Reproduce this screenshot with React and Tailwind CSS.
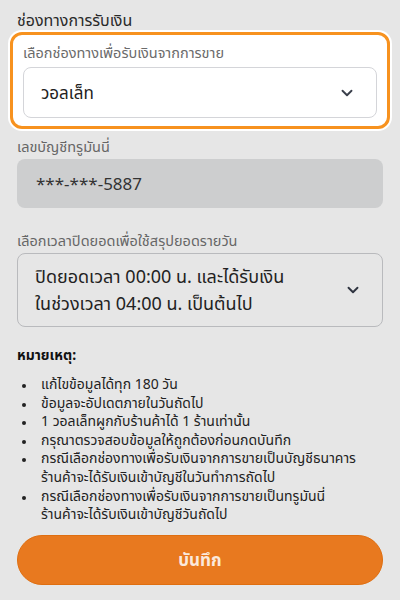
import { ChevronDown } from 'lucide-react';

const notes = [
  ['แก้ไขข้อมูลได้ทุก 180 วัน'],
  ['ข้อมูลจะอัปเดตภายในวันถัดไป'],
  ['1 วอลเล็ทผูกกับร้านค้าได้ 1 ร้านเท่านั้น'],
  ['กรุณาตรวจสอบข้อมูลให้ถูกต้องก่อนกดบันทึก'],
  ['กรณีเลือกช่องทางเพื่อรับเงินจากการขายเป็นบัญชีธนาคาร', 'ร้านค้าจะได้รับเงินเข้าบัญชีในวันทำการถัดไป'],
  ['กรณีเลือกช่องทางเพื่อรับเงินจากการขายเป็นทรูมันนี่', 'ร้านค้าจะได้รับเงินเข้าบัญชีวันถัดไป'],
];

const App = () => {
  return (
    <div
      className="w-[400px] h-[600px] overflow-hidden bg-[#e6e6e6] text-[#2b2b2b] px-[17px]"
      style={{ fontFamily: '"Noto Sans", "Noto Sans Thai", sans-serif' }}
    >
      <h2 className="pt-[7px] text-[16px] leading-[26px] text-[#2a2a2a]">ช่องทางการรับเงิน</h2>

      <div className="-mx-[9px] -mt-[3px] rounded-[14px] bg-white p-[2px]">
        <div className="rounded-[12px] border-[3px] border-[#f7921f] px-[10px] pt-[5px] pb-[8px]">
          <p className="text-[14.5px] leading-[24px] text-[#6b6b6b]">เลือกช่องทางเพื่อรับเงินจากการขาย</p>
          <div className="mt-[3px] flex h-[51px] items-center justify-between rounded-[8px] border border-[#d4d5d9] bg-white pl-[17px] pr-[20px]">
            <span className="text-[17px] text-[#222]">วอลเล็ท</span>
            <ChevronDown className="h-[18px] w-[18px] text-[#3a3f4b]" strokeWidth={2.5} />
          </div>
        </div>
      </div>

      <p className="mt-[3px] text-[14.5px] leading-[24px] text-[#666]">เลขบัญชีทรูมันนี่</p>
      <div className="mt-[1px] flex h-[49px] items-center rounded-[8px] bg-[#cdcecf] px-[19px]">
        <span className="text-[17px] text-[#333]">***-***-5887</span>
      </div>

      <p className="mt-[20px] text-[14.5px] leading-[24px] text-[#666]">เลือกเวลาปิดยอดเพื่อใช้สรุปยอดรายวัน</p>
      <div className="mt-[1px] flex h-[74px] items-center justify-between rounded-[8px] border border-[#b9babd] pl-[17px] pr-[20px]">
        <span className="text-[18px] leading-[27px] text-[#222]">
          ปิดยอดเวลา 00:00 น. และได้รับเงิน
          <br />
          ในช่วงเวลา 04:00 น. เป็นต้นไป
        </span>
        <ChevronDown className="h-[18px] w-[18px] text-[#2f3440]" strokeWidth={2.5} />
      </div>

      <p className="mt-[17px] text-[14px] font-bold leading-[22px] text-[#111]">หมายเหตุ:</p>
      <ul className="mt-[9px] list-disc pl-[19px] text-[14px] leading-[18.6px] text-[#222] marker:text-[10px]">
        {notes.map((lines) => (
          <li key={lines[0]} className="pl-[5px] whitespace-nowrap">
            {lines.map((line, i) => (
              <span key={line}>
                {i > 0 && <br />}
                {line}
              </span>
            ))}
          </li>
        ))}
      </ul>

      <button className="mt-[11px] flex h-[50px] w-full items-center justify-center rounded-full border border-[#df6e10] bg-[#e8791f] text-[17px] font-bold text-[#fbe9dc]">
        บันทึก
      </button>
    </div>
  );
};

export default App;
